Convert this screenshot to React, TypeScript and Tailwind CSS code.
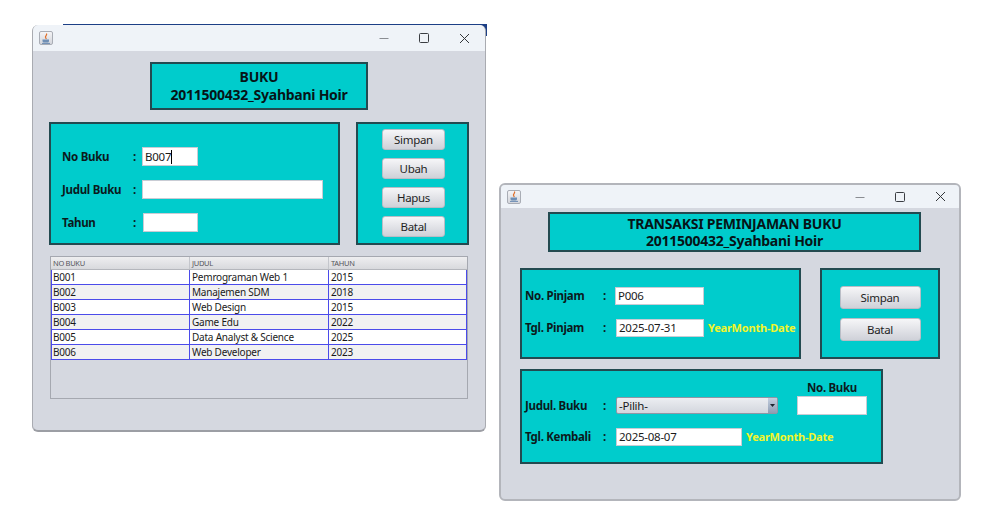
import type { ReactNode } from 'react';

const books = [
  ['B001', 'Pemrograman Web 1', '2015'],
  ['B002', 'Manajemen SDM', '2018'],
  ['B003', 'Web Design', '2015'],
  ['B004', 'Game Edu', '2022'],
  ['B005', 'Data Analyst & Science', '2025'],
  ['B006', 'Web Developer', '2023'],
];

function JavaIcon() {
  return (
    <div className="flex h-[14px] w-[14px] items-center justify-center rounded-[2px] border border-[#a9adb5] bg-gradient-to-b from-[#f4f4f6] to-[#d4d6dc]">
      <svg width="10" height="11" viewBox="0 0 10 11" fill="none">
        <path d="M5.5 0.5C6.5 2 4 3 4.5 4.5C4.8 5.3 5.6 5.6 5.6 5.6" stroke="#e0702a" strokeWidth="1.2" />
        <path d="M1.5 6.5h6.5v1.5c0 1-1 1.5-2 1.5H3.5c-1 0-2-.5-2-1.5z" fill="#6f8fb5" />
        <path d="M1 10.4h8" stroke="#4f79a8" strokeWidth="0.8" />
      </svg>
    </div>
  );
}

function TitleBar({ height, padRight }: { height: string; padRight: string }) {
  return (
    <div className={`flex items-center bg-[#eff3f8] pl-[6px] ${height}`}>
      <JavaIcon />
      <div className={`ml-auto flex items-center gap-[30px] ${padRight}`}>
        <svg width="10" height="10" viewBox="0 0 10 10">
          <path d="M0.5 5.5h9" stroke="#8a8d92" strokeWidth="1.2" />
        </svg>
        <svg width="10" height="10" viewBox="0 0 10 10" fill="none">
          <rect x="0.5" y="0.5" width="9" height="9" rx="1" stroke="#3a3d42" strokeWidth="1" />
        </svg>
        <svg width="11" height="11" viewBox="0 0 11 11" fill="none">
          <path d="M1 1l9 9M10 1l-9 9" stroke="#33363a" strokeWidth="1" />
        </svg>
      </div>
    </div>
  );
}

function Field({ value, caret, className }: { value?: string; caret?: boolean; className: string }) {
  return (
    <div className={`flex shrink-0 items-center border border-[#c9ccd4] bg-white pl-[2px] text-[11.5px] tracking-[-0.25px] text-[#1a1a1a] ${className}`}>
      {value}
      {caret && <span className="h-[14px] w-px bg-black" />}
    </div>
  );
}

function Button({ children, className }: { children: ReactNode; className: string }) {
  return (
    <div className={`flex items-center justify-center rounded-[3px] border border-[#b9bdc6] bg-gradient-to-b from-[#f6f6f8] to-[#cfd1d8] text-[11.5px] tracking-[-0.3px] text-[#1f1f1f] ${className}`}>
      {children}
    </div>
  );
}

function Label({ text, colon, className }: { text: string; colon: string; className: string }) {
  return (
    <>
      <span className={`shrink-0 text-[11.5px] font-bold tracking-[-0.3px] whitespace-nowrap text-[#0b1a1c] ${className}`}>{text}</span>
      <span className={`shrink-0 text-[11.5px] font-bold text-[#0b1a1c] ${colon}`}>:</span>
    </>
  );
}

function Hint() {
  return <span className="ml-[4px] text-[11px] font-bold tracking-[-0.2px] whitespace-nowrap text-[#f2f52a]">YearMonth-Date</span>;
}

function Panel({ children, className }: { children: ReactNode; className: string }) {
  return <div className={`border-2 border-[#234a50] bg-[#00cccc] ${className}`}>{children}</div>;
}

function BookTable() {
  return (
    <div className="ml-px mt-[11px] h-[143px] w-[418px] border border-[#a5a8b0]">
      <div className="grid h-[13px] grid-cols-[139px_139px_1fr] border-b border-[#b4b6bc] bg-gradient-to-b from-[#eeeef0] to-[#d8d9dd] text-[7.5px] leading-[12px] tracking-[-0.3px] text-[#55565c]">
        <span className="border-r border-[#c4c6cc] pl-[2px]">NO BUKU</span>
        <span className="border-r border-[#c4c6cc] pl-[2px]">JUDUL</span>
        <span className="pl-[2px]">TAHUN</span>
      </div>
      {books.map((row, i) => (
        <div
          key={row[0]}
          className={`grid h-[15px] grid-cols-[138px_139px_1fr] border-x border-b border-[#4b4bea] text-[10px] leading-[14px] tracking-[-0.22px] text-[#1a1a1a] ${i % 2 === 0 ? 'bg-white' : 'bg-[#f1f1f2]'}`}
        >
          <span className="border-r border-[#4b4bea] pl-[1px]">{row[0]}</span>
          <span className="border-r border-[#4b4bea] pl-[2px]">{row[1]}</span>
          <span className="pl-[2px]">{row[2]}</span>
        </div>
      ))}
    </div>
  );
}

function BukuWindow() {
  return (
    <div className="absolute left-[32px] top-[25px] flex h-[407px] w-[454px] flex-col overflow-hidden rounded-[6px] border-x border-b-2 border-x-[#a9abb1] border-b-[#9c9ea4] bg-[#d5d8e0]">
      <TitleBar height="h-[26px]" padRight="pr-[15px]" />
      <div className="pl-[16px]">
        <div className="ml-[101px] mt-[11px] flex h-[48px] w-[218px] flex-col items-center justify-center border-2 border-[#234a50] bg-[#00cccc] pb-px text-[14px] font-bold leading-[18px] tracking-[-0.25px] text-[#061417]">
          <span>BUKU</span>
          <span>2011500432_Syahbani Hoir</span>
        </div>
        <div className="mt-[12px] flex gap-[16px]">
          <Panel className="flex h-[123px] w-[291px] flex-col gap-[14px] pl-[11px] pt-[23px]">
            <div className="flex h-[19px] items-center">
              <Label text="No Buku" className="w-[71px]" colon="w-[9px]" />
              <Field value="B007" caret className="h-[19px] w-[56px]" />
            </div>
            <div className="flex h-[19px] items-center">
              <Label text="Judul Buku" className="w-[71px]" colon="w-[9px]" />
              <Field className="h-[19px] w-[181px]" />
            </div>
            <div className="flex h-[19px] items-center">
              <Label text="Tahun" className="w-[71px]" colon="w-[10px]" />
              <Field className="h-[19px] w-[55px]" />
            </div>
          </Panel>
          <Panel className="flex h-[123px] w-[113px] flex-col items-center gap-[8px] pl-[2px] pt-[5px]">
            <Button className="h-[21px] w-[63px]">Simpan</Button>
            <Button className="h-[21px] w-[63px]">Ubah</Button>
            <Button className="h-[21px] w-[63px]">Hapus</Button>
            <Button className="h-[21px] w-[63px]">Batal</Button>
          </Panel>
        </div>
        <BookTable />
      </div>
    </div>
  );
}

function TransaksiWindow() {
  return (
    <div className="absolute left-[499px] top-[183px] flex h-[318px] w-[462px] flex-col overflow-hidden rounded-[6px] border-2 border-[#b3b5bb] bg-[#d5d8e0]">
      <TitleBar height="h-[23px]" padRight="pr-[13px]" />
      <div className="pl-[19px]">
        <div className="ml-[28px] mt-[4px] flex h-[40px] w-[373px] flex-col items-center justify-center border-2 border-[#234a50] bg-[#00cccc] text-[14px] font-bold leading-[17px] tracking-[-0.25px] text-[#061417]">
          <span>TRANSAKSI PEMINJAMAN BUKU</span>
          <span>2011500432_Syahbani Hoir</span>
        </div>
        <div className="mt-[16px] flex gap-[19px]">
          <Panel className="flex h-[91px] w-[281px] flex-col gap-[14px] pl-[3px] pt-[17px]">
            <div className="flex h-[18px] items-center">
              <Label text="No. Pinjam" className="w-[78px]" colon="w-[12px]" />
              <Field value="P006" className="h-[18px] w-[89px]" />
            </div>
            <div className="flex h-[18px] items-center">
              <Label text="Tgl. Pinjam" className="w-[78px]" colon="w-[13px]" />
              <Field value="2025-07-31" className="h-[18px] w-[88px]" />
              <Hint />
            </div>
          </Panel>
          <Panel className="flex h-[91px] w-[120px] flex-col items-center gap-[9px] pt-[16px]">
            <Button className="h-[23px] w-[81px]">Simpan</Button>
            <Button className="h-[23px] w-[81px]">Batal</Button>
          </Panel>
        </div>
        <Panel className="mt-[10px] flex h-[95px] w-[363px] flex-col gap-[13px] pl-[3px] pt-[9px]">
          <div className="flex items-end">
            <div className="flex h-[19px] items-center">
              <Label text="Judul. Buku" className="w-[78px]" colon="w-[13px]" />
              <div className="flex h-[17px] w-[162px] items-center justify-between rounded-[2px] border border-[#8f96a5] bg-gradient-to-b from-[#eceef2] to-[#d3d6dd] pl-[2px] text-[11.5px] tracking-[-0.25px] text-[#1a1a1a]">
                -Pilih-
                <span className="flex h-full w-[9px] items-center justify-center bg-gradient-to-b from-[#c4cfdf] to-[#8f9db3]">
                  <svg width="5" height="3" viewBox="0 0 5 3">
                    <path d="M0 0h5L2.5 3z" fill="#1f2430" />
                  </svg>
                </span>
              </div>
            </div>
            <div className="ml-[19px] flex flex-col items-center">
              <span className="mb-px text-[11.5px] font-bold leading-[15px] tracking-[-0.3px] text-[#0b1a1c]">No. Buku</span>
              <Field className="h-[19px] w-[70px]" />
            </div>
          </div>
          <div className="flex h-[18px] items-center">
            <Label text="Tgl. Kembali" className="w-[78px]" colon="w-[13px]" />
            <Field value="2025-08-07" className="h-[18px] w-[126px]" />
            <Hint />
          </div>
        </Panel>
      </div>
    </div>
  );
}

export default function App() {
  return (
    <div className="relative h-[526px] w-[994px] overflow-hidden bg-white font-['Noto_Sans',sans-serif]">
      {/* sliver of the window behind the first one */}
      <div className="absolute left-[63px] top-[24px] h-[12px] w-[424px] bg-[#1c3f86]" />
      <BukuWindow />
      <TransaksiWindow />
    </div>
  );
}
